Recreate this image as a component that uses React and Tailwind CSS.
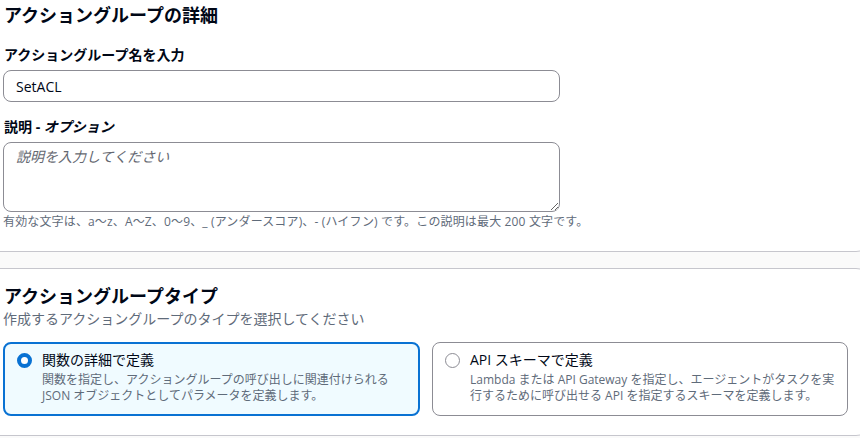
import React from "react";

const font = { fontFamily: '"Open Sans","Noto Sans CJK JP",sans-serif' };

export default function App() {
  return (
    <div
      className="w-[860px] h-[438px] overflow-hidden bg-[#fafafa] text-[#000716]"
      style={font}
    >
      <div className="-ml-[20px] w-[892px] bg-white border-b border-[#c6c6cd] rounded-b-[16px] pl-[23px] pt-[3px] pb-[21px]">
        <h2 className="pl-[1px] text-[18px] leading-[24px] font-bold">アクショングループの詳細</h2>
        <div className="pl-[1px] mt-[18px] text-[14px] leading-[20px] font-bold">アクショングループ名を入力</div>
        <input
          defaultValue="SetACL"
          className="mt-[5px] block w-[557px] h-[32px] rounded-[8px] border border-[#8c8c94] px-[12px] text-[14px] text-[#000716] outline-none"
          style={font}
        />
        <div className="pl-[1px] mt-[15px] text-[14px] leading-[20px] font-bold">
          説明 - <i>オプション</i>
        </div>
        <textarea
          placeholder="説明を入力してください"
          className="mt-[5px] block w-[557px] h-[70px] rounded-[8px] border border-[#8c8c94] px-[12px] py-[4px] text-[14px] leading-[20px] outline-none placeholder:italic placeholder:text-[#656871]"
          style={font}
        />
        <div className="mt-[2px] text-[12px] leading-[16px] text-[#5f6b7a] tracking-[0.15px]">
          有効な文字は、a〜z、A〜Z、0〜9、_ (アンダースコア)、- (ハイフン) です。この説明は最大 200 文字です。
        </div>
      </div>
      <div className="mt-[16px] -ml-[20px] w-[892px] bg-white border-t border-b border-[#c6c6cd] rounded-[16px] pl-[23px] pt-[15px] pb-[19px]">
        <h2 className="pl-[1px] text-[18px] leading-[24px] font-bold">アクショングループタイプ</h2>
        <div className="mt-[1px] text-[14px] leading-[20px] text-[#5f6b7a]">
          作成するアクショングループのタイプを選択してください
        </div>
        <div className="mt-[13px] flex gap-[12px]">
          <div className="w-[417px] h-[74px] rounded-[8px] border-2 border-[#0972d3] bg-[#f0fbff] pl-[12px] pt-[6px] flex gap-[10px]">
            <div className="mt-[3px] w-[15px] h-[15px] rounded-full border-[4px] border-[#0972d3] bg-white shrink-0" />
            <div>
              <div className="text-[14px] leading-[20px]">関数の詳細で定義</div>
              <div className="mt-[2px] text-[12px] leading-[16px] text-[#5f6b7a] whitespace-nowrap">
                関数を指定し、アクショングループの呼び出しに関連付けられる
                <br />
                JSON オブジェクトとしてパラメータを定義します。
              </div>
            </div>
          </div>
          <div className="w-[416px] h-[74px] rounded-[8px] border border-[#8c8c94] bg-white pl-[12px] pt-[7px] flex gap-[10px]">
            <div className="mt-[3px] w-[15px] h-[15px] rounded-full border-[1.5px] border-[#8c8c94] bg-white shrink-0" />
            <div>
              <div className="text-[14px] leading-[20px]">API スキーマで定義</div>
              <div className="mt-[2px] text-[12px] leading-[16px] text-[#5f6b7a] whitespace-nowrap">
                Lambda または API Gateway を指定し、エージェントがタスクを実
                <br />
                行するために呼び出せる API を指定するスキーマを定義します。
              </div>
            </div>
          </div>
        </div>
      </div>
    </div>
  );
}
